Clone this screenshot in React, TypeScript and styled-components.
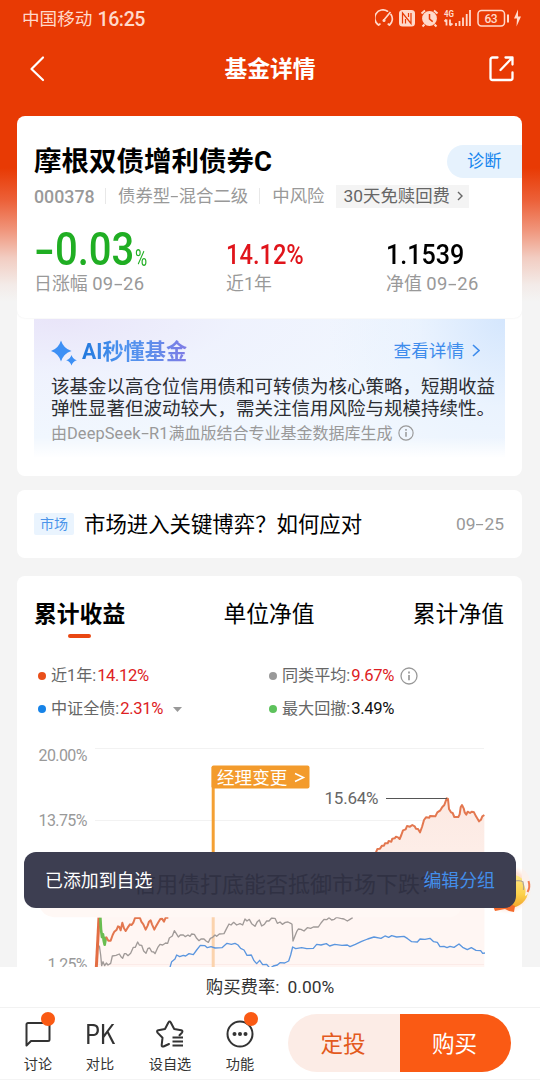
import React from 'react';
import styled, { createGlobalStyle } from 'styled-components';

const GlobalStyle = createGlobalStyle`
  * { box-sizing: border-box; }
  body { margin: 0; font-family: Roboto, "Noto Sans CJK SC", sans-serif; }
`;

const Screen = styled.div`
  position: relative;
  width: 540px;
  height: 1080px;
  overflow: hidden;
  display: flex;
  flex-direction: column;
  background: linear-gradient(180deg, #e83a04 0, #e83a04 168px, #ec6038 200px, #f0957b 230px, #f2cdc2 258px, #f3ebe8 285px, #f4f4f4 302px);
`;

const StatusBar = styled.div`
  height: 38px;
  flex: none;
  display: flex;
  align-items: center;
  justify-content: space-between;
  padding: 0 17px 0 22px;
  color: #ffd9cb;
  font-size: 17.6px;
`;

const Carrier = styled.div`
  display: flex;
  align-items: center;
  gap: 5px;
  height: 24px;
  white-space: nowrap;
  line-height: 24px;
  b { font-weight: 500; font-size: 19.6px; letter-spacing: -0.4px; margin-top: 1px; }
`;

const NavBar = styled.div`
  height: 78px;
  flex: none;
  display: flex;
  align-items: flex-start;
  justify-content: space-between;
  padding: 16px 24px 0 29px;
  color: #fff;
`;

const NavTitle = styled.h1`
  margin: 1px 0 0;
  font-size: 22.8px;
  line-height: 30px;
  font-weight: 700;
  padding-left: 7px;
`;

const Content = styled.main`
  flex: 1;
  min-height: 0;
  overflow: hidden;
  padding: 0 18px 0 17px;
  display: flex;
  flex-direction: column;
`;

const Card = styled.section<{ $h: number; $mb?: number }>`
  flex: none;
  height: ${p => p.$h}px;
  margin-bottom: ${p => p.$mb ?? 0}px;
  border-radius: 8px;
  background: #fff;
  overflow: hidden;
`;

const Summary = styled.div`
  height: 202px;
  padding: 28px 0 0 17px;
  border-radius: 0 0 8px 8px;
  box-shadow: 0 0 2px #e9e9e9;
`;

const TitleRow = styled.div`
  display: flex;
  align-items: center;
  justify-content: space-between;
  height: 34px;
`;

const FundName = styled.h2`
  margin: 2px 0 0;
  font-size: 27.5px;
  line-height: 34px;
  font-weight: 700;
  color: #000;
  white-space: nowrap;
`;

const Diagnose = styled.div`
  width: 75px;
  height: 33px;
  border-radius: 17px 0 0 17px;
  background: #e6f2fd;
  color: #1786ee;
  font-size: 17.2px;
  line-height: 33px;
  padding-left: 20px;
`;

const MetaRow = styled.div`
  display: flex;
  align-items: center;
  height: 24px;
  margin-top: 6px;
  font-size: 17.4px;
  line-height: 22px;
  color: #999;
  white-space: nowrap;
`;

const MetaText = styled.span`
  height: 22px;
`;

const Code = styled.span`
  font-size: 17.8px;
  font-weight: 500;
  width: 60px;
  margin-top: 1px;
`;

const Divider = styled.i`
  width: 1px;
  height: 16px;
  background: #e8e8e8;
  margin: 0 12px 0 11px;
`;

const FeeTag = styled.span`
  display: flex;
  align-items: center;
  gap: 7px;
  height: 23px;
  width: 133px;
  margin-left: 12px;
  padding-left: 7px;
  background: #f4f4f4;
  color: #666;
`;

const Dash = styled.span<{ $w: number; $up?: number; $k?: number }>`
  display: inline-block;
  width: ${p => p.$w}px;
  text-align: center;
  transform: translateY(${p => -(p.$up ?? 0)}px) scaleX(${p => p.$k ?? 1.7});
`;

const Stats = styled.div`
  display: grid;
  grid-template-columns: 192px 160px 1fr;
  margin-top: 17px;
`;

const Stat = styled.div`
  display: flex;
  flex-direction: column;
`;

const StatTop = styled.div`
  height: 46px;
  display: flex;
  align-items: flex-end;
`;

const Figure = styled.span<{ $size: number; $w: number; $c: string; $sx: number; $lh: number; $wt?: number }>`
  display: block;
  width: ${p => p.$w}px;
  color: ${p => p.$c};
  font-size: ${p => p.$size}px;
  line-height: ${p => p.$lh}px;
  font-weight: ${p => p.$wt ?? 500};
  white-space: nowrap;
  transform: scaleX(${p => p.$sx});
  transform-origin: left;
`;

const StatLabel = styled.div`
  font-size: 17.9px;
  line-height: 24px;
  color: #999;
  margin-top: 1px;
`;

const StatDate = styled.span`
  font-size: 18.4px;
  letter-spacing: 0.4px;
`;

const AiBox = styled.div`
  height: 139px;
  margin: 1px 17px 0;
  padding: 20px 8px 0 17px;
  background:
    linear-gradient(180deg, rgba(255,255,255,0) 0, rgba(255,255,255,0) 85%, #fff 100%),
    radial-gradient(circle at 100% 0, rgba(205,226,253,.8) 0, rgba(226,238,254,.45) 18%, rgba(255,255,255,0) 36%),
    radial-gradient(ellipse at 5% 0, #e9e5f9 0, rgba(238,240,253,.7) 28%, rgba(255,255,255,0) 60%),
    #f1f7fe;
`;

const AiHead = styled.div`
  height: 26px;
  display: flex;
  align-items: center;
`;

const AiTitle = styled.span`
  margin: -1px 0 0 4px;
  flex: 1;
  font-size: 21.2px;
  line-height: 26px;
  font-weight: 700;
  color: transparent;
  background: linear-gradient(90deg, #2178dd 0, #4e93ef 40px, #5a90ec 65px, #817be5 106px);
  background-clip: text;
  -webkit-background-clip: text;
`;

const AiLink = styled.span`
  display: flex;
  align-items: center;
  gap: 8px;
  margin: -6px 17px 0 0;
  font-size: 17.6px;
  color: #3e8cec;
  svg { margin-top: 3px; }
`;

const AiText = styled.p`
  margin: 11px 0 0;
  font-size: 18.5px;
  line-height: 22px;
  color: #2c2e33;
  white-space: nowrap;
`;

const AiNote = styled.div`
  display: flex;
  align-items: center;
  gap: 5px;
  margin-top: 3px;
  height: 22px;
  line-height: 20px;
  font-size: 16px;
  color: #999;
  white-space: nowrap;
  svg { margin-top: -2px; }
`;

const ModelName = styled.span`
  font-size: 16.4px;
  letter-spacing: 0.1px;
`;

const NoteText = styled.span`
  margin-top: -1px;
`;

const NewsRow = styled.div`
  height: 68px;
  padding: 0 18px 0 17px;
  display: flex;
  align-items: center;
`;

const NewsTag = styled.span`
  width: 40px;
  height: 22px;
  border-radius: 2px;
  background: #eaf4fe;
  color: #4b94ea;
  font-size: 14px;
  line-height: 22px;
  text-align: center;
`;

const NewsTitle = styled.span`
  flex: 1;
  margin: -3px 0 0 10px;
  font-size: 21.4px;
  color: #000;
  white-space: nowrap;
`;

const NewsDate = styled.span`
  font-size: 17.4px;
  color: #999;
`;

const Tabs = styled.div`
  display: flex;
  justify-content: space-between;
  padding: 22px 18px 0 17px;
  height: 62px;
`;

const Tab = styled.div<{ $on?: boolean }>`
  display: flex;
  flex-direction: column;
  align-items: center;
  font-size: 22.8px;
  line-height: 33px;
  font-weight: ${p => (p.$on ? 700 : 400)};
  color: #000;
  &::after {
    content: "";
    width: 23px;
    height: 4px;
    margin-top: 3px;
    border-radius: 2px;
    background: ${p => (p.$on ? '#e94712' : 'transparent')};
  }
`;

const Legend = styled.div`
  display: grid;
  grid-template-columns: 231px 1fr;
  grid-auto-rows: 33px;
  padding: 21px 0 0 21px;
  height: 97px;
`;

const LegendItem = styled.div<{ $dot: string }>`
  display: flex;
  align-items: center;
  font-size: 16.1px;
  line-height: 24px;
  color: #666;
  white-space: nowrap;
  &::before {
    content: "";
    width: 8px;
    height: 8px;
    margin-right: 5px;
    border-radius: 50%;
    background: ${p => p.$dot};
  }
  svg { margin-left: 6px; }
`;

const Value = styled.b<{ $c: string }>`
  font-weight: 400;
  font-size: 16.6px;
  letter-spacing: -0.35px;
  margin: 1px 0 0 1px;
  color: ${p => p.$c};
`;

const ChartSvg = styled.svg`
  display: block;
  font-family: Roboto, "Noto Sans CJK SC", sans-serif;
`;

const FeeBar = styled.div`
  flex: none;
  height: 41px;
  background: #fff;
  border-bottom: 1px solid #f2f2f2;
  display: flex;
  justify-content: center;
  align-items: center;
  gap: 8px;
  font-size: 17.4px;
  line-height: 24px;
  color: #333;
`;

const ActionBar = styled.div`
  flex: none;
  height: 72px;
  background: #fff;
  border-bottom: 1px solid #f4f4f4;
  display: flex;
`;

const Actions = styled.div`
  width: 288px;
  display: grid;
  grid-template-columns: 76px 48px 92px 48px;
`;

const Action = styled.div`
  display: flex;
  flex-direction: column;
  align-items: center;
  padding-top: 9px;
  font-size: 14.2px;
  line-height: 20px;
  color: #333;
  white-space: nowrap;
`;

const IconSlot = styled.div<{ $badge?: boolean }>`
  position: relative;
  height: 34px;
  margin-bottom: 3px;
  display: flex;
  align-items: center;
  &::after {
    content: "";
    display: ${p => (p.$badge ? 'block' : 'none')};
    position: absolute;
    top: -5px;
    right: -4px;
    width: 14px;
    height: 14px;
    border-radius: 50%;
    background: #fa5a14;
  }
`;

const Pk = styled.span`
  font: 400 27px "Noto Sans CJK SC", sans-serif;
  line-height: 30px;
  margin-top: -3px;
  letter-spacing: -0.5px;
  transform: scaleX(.9);
`;

const TradeButton = styled.button<{ $primary?: boolean }>`
  margin-top: 6px;
  width: ${p => (p.$primary ? 111 : 112)}px;
  height: 58px;
  border: 0;
  padding: 0 2px 2px 0;
  font: 400 22.6px "Noto Sans CJK SC", sans-serif;
  color: ${p => (p.$primary ? '#fff' : '#e35a1d')};
  background: ${p => (p.$primary ? '#fa5a14' : '#fcece6')};
  border-radius: ${p => (p.$primary ? '0 29px 29px 0' : '29px 0 0 29px')};
`;

const MascotSvg = styled.svg`
  position: absolute;
  left: 484px;
  top: 862px;
`;

const Toast = styled.div`
  position: absolute;
  left: 24px;
  top: 852px;
  width: 492px;
  height: 55.5px;
  border-radius: 12px;
  background: #3d3e51;
  display: flex;
  align-items: center;
  justify-content: space-between;
  padding: 0 21px 2px 21px;
  font-size: 17.9px;
  color: #fff;
`;

const ToastText = styled.span`
  position: relative;
`;

const ToastLink = styled(ToastText)`
  color: #438eea;
`;

const Ghost = styled.span`
  position: absolute;
  left: 110px;
  top: 17px;
  font-size: 22px;
  line-height: 32px;
  color: #303143;
  white-space: nowrap;
`;

const Chevron = ({ w, h, sw }: { w: number; h: number; sw: number }) => (
  <svg width={w} height={h} viewBox={`0 0 ${w} ${h}`} fill="none" stroke="currentColor" strokeWidth={sw}>
    <path d={`M1 1L${w - 1} ${h / 2}L1 ${h - 1}`} />
  </svg>
);

const Info = ({ s }: { s: number }) => (
  <svg width={s} height={s} viewBox="0 0 18 18" fill="none" stroke="#999" strokeWidth="1.3">
    <circle cx="9" cy="9" r="8" />
    <path d="M9 8v5.2M9 4.6v1.8" strokeWidth="1.7" />
  </svg>
);

const StatusIcons = () => (
  <svg width="148" height="20" viewBox="375 9 148 20" fill="none" stroke="#ffd9cb" strokeWidth="1.7">
    <path d="M378.5 25A8 8 0 0 1 387.5 11.2M391 14.5A8 8 0 0 1 389.5 25" strokeLinecap="round" />
    <path d="M378.5 25l2-1.4M389.5 25l-1.8-1.4M383.5 20.5L390.5 12" />
    <circle cx="384" cy="20.5" r="1.5" fill="#ffd9cb" stroke="none" />
    <rect x="399" y="10" width="16" height="16.5" rx="3.5" fill="#ffd9cb" stroke="none" />
    <path d="M402.5 23.5V13l8.5 10.5V13M405.5 23.5v-4.5M408.5 13v4" stroke="#e83a04" strokeWidth="1.2" />
    <circle cx="429.5" cy="18.5" r="7.4" fill="#ffd9cb" stroke="none" />
    <path d="M421.5 13.5l3.5-3M437.5 13.5l-3.5-3M424.5 24.5l-2 2M434.5 24.5l2 2" strokeWidth="2" />
    <path d="M429.5 14v5l3.2 2.6" stroke="#e83a04" strokeWidth="1.5" />
    <text x="444" y="17" fontSize="9" fontWeight="700" fill="#ffd9cb" stroke="none" textLength="10" lengthAdjust="spacingAndGlyphs">4G</text>
    <path d="M446.5 19.5v6M444.5 21.5l2-2M450 19.5v6M452.5 23.5l-2.5 2M456 23v3M459.5 21v5M463 17.5v8.5M466.7 14v12M470 10v16" strokeWidth="1.8" />
    <rect x="478" y="10.5" width="26.5" height="15.5" rx="3.5" strokeWidth="1.5" />
    <path d="M508 14.5v8" strokeWidth="2" />
    <text x="484.5" y="22.6" fontSize="12" fontWeight="500" fill="#ffd9cb" stroke="none" textLength="13">63</text>
    <path d="M518 9.5l-4 9h3l-.5 8 4.5-10h-3z" fill="#ffd9cb" stroke="none" />
  </svg>
);

const redLeft = '318,605 325,617 332,617 338,600 343,590 350,584 354,574 358,576 362,586 367,563 372,580 377,588 383,578 390,568 395,570 400,563 405,549 420,549 424,560 430,568 437,584 443,572 447,560 452,556 456,568 463,584 469,572 475,562 481,552 486,551 492,560 497,548 505,548';
const redRight = '1128,352 1132,342 1140,341 1146,332 1152,332 1155,325 1163,325 1166,318 1174,320 1177,311 1184,310 1188,305 1194,307 1199,312 1204,300 1209,286 1217,283 1221,273 1230,275 1237,270 1244,274 1248,281 1254,282 1260,292 1266,276 1272,255 1278,247 1288,248 1290,243 1306,244 1312,232 1321,226 1327,216 1333,210 1340,190 1344,192 1347,222 1353,232 1358,234 1363,246 1375,246 1379,238 1382,217 1386,210 1391,220 1394,232 1399,239 1403,230 1410,234 1415,230 1422,232 1428,244 1437,259 1443,254 1447,244 1453,240';
const grayLine = '298,632 302,660 305,692 309,680 314,692 319,684 324,690 332,685 337,663 348,661 358,657 363,665 368,670 373,656 378,656 384,662 392,655 400,637 406,637 413,621 418,630 425,631 431,648 438,655 444,640 449,639 455,650 461,651 465,656 473,638 480,628 488,630 497,624 503,625 508,609 517,603 523,587 529,596 535,606 541,600 550,600 556,605 564,600 570,604 575,597 583,598 590,610 597,617 603,612 612,612 618,618 625,622 631,610 638,607 645,600 650,604 658,597 672,596 680,580 687,567 693,570 701,562 710,570 720,566 728,570 735,552 741,558 748,553 755,566 765,574 772,560 778,555 785,573 793,568 800,558 807,558 815,549 825,550 832,565 840,561 847,568 856,562 864,561 872,565 876,568 879,618 884,605 890,590 895,582 903,583 912,588 922,578 932,580 940,576 955,576 963,564 972,553 980,554 987,548 995,555 1003,553 1010,547 1022,550 1032,552 1042,558 1050,553 1058,548';
const blueLine = '510,697 515,680 525,672 530,660 539,665 550,661 557,663 567,656 580,659 590,645 601,631 615,632 622,638 633,635 645,639 666,638 675,630 681,625 694,628 705,625 714,630 722,640 732,645 741,661 754,660 762,677 770,686 779,676 788,689 800,688 810,700 820,693 832,690 840,683 854,684 866,678 872,660 878,636 887,641 905,638 920,641 940,640 950,628 963,630 979,626 989,633 1004,628 1026,631 1042,630 1050,635 1066,628 1085,619 1103,612 1122,606 1143,610 1155,603 1166,607 1175,602 1190,606 1212,604 1223,611 1235,620 1252,621 1260,612 1275,613 1290,610 1301,620 1312,622 1320,635 1332,634 1341,638 1350,634 1362,637 1377,627 1388,637 1402,644 1414,638 1428,646 1442,647 1448,655 1455,654';

const Chart = () => (
  <ChartSvg width="505" height="232" viewBox="17 0 505 232">
    <defs>
      <linearGradient id="area" x1="0" y1="190" x2="0" y2="697" gradientUnits="userSpaceOnUse">
        <stop offset="0" stopColor="#fce9e2" />
        <stop offset="1" stopColor="#fff6f3" />
      </linearGradient>
    </defs>
    <path d="M95 13.5H484M95 85.5H484" stroke="#f2f2f2" />
    <polygon points={`1128,697 ${redRight} 1453,697`} fill="url(#area)" transform="scale(.33333)" />
    <path d="M484 160V232H97V160Z" fill="#fff6f3" />
    <path d="M97 229.5H484" stroke="#fcebe8" />
    <path d="M213.2 32V118" stroke="#f4a033" strokeWidth="3" />
    <path d="M213.2 182V232" stroke="#fbd3ad" strokeWidth="3" />
    <g transform="scale(.33333)" fill="none" strokeLinejoin="round" strokeWidth="4">
      <polyline points={grayLine} stroke="#a09a98" />
      <polyline points={blueLine} stroke="#5b96df" />
      <polyline points="289,697 297,548" stroke="#e36d43" strokeWidth="9" />
      <polyline points="301,548 303,583 306,606 309,598 311,616 314,629 318,605" stroke="#69bd50" strokeWidth="8" />
      <polyline points={redLeft} stroke="#e3774f" strokeWidth="6" />
      <polyline points={redRight} stroke="#e3774f" strokeWidth="6" />
    </g>
    <path d="M38 120H484V168H463Q460 182 449 182.3H54Q42 181 39 170Z" fill="#fff8f5" />
    <path d="M386 63.5H447" stroke="#555" strokeWidth="1.2" />
    <rect x="211.5" y="30.5" width="98" height="23" rx="2" fill="#f39b2c" />
    <g fontSize="16" fill="#999">
      <text x="38.5" y="26" textLength="49">20.00%</text>
      <text x="38.5" y="91" textLength="49">13.75%</text>
      <text x="47.5" y="235" textLength="40">1.25%</text>
    </g>
    <text x="324.5" y="69" fontSize="17" fill="#666" textLength="54">15.64%</text>
    <text x="217" y="49" fontSize="17.6" fill="#fff">经理变更</text>
    <path d="M295 38.5l8.5 4-8.5 4" stroke="#fff" strokeWidth="1.5" fill="none" />
  </ChartSvg>
);

const Mascot = () => (
  <MascotSvg width="52" height="54" viewBox="484 862 52 54">
    <defs>
      <radialGradient id="halo"><stop offset=".75" stopColor="#ffe0d2" /><stop offset="1" stopColor="#fff1e8" stopOpacity="0" /></radialGradient>
      <linearGradient id="body" x1="0" y1="0" x2="0" y2="1"><stop stopColor="#ffe98a" /><stop offset=".6" stopColor="#fcd14a" /><stop offset="1" stopColor="#f0a32a" /></linearGradient>
    </defs>
    <circle cx="507" cy="889" r="25" fill="url(#halo)" />
    <ellipse cx="509" cy="891" rx="19" ry="17" fill="url(#body)" />
    <path d="M522 868q9 7 8 17t-5 11q2-8-3-14z" fill="#fbf1ec" />
    <path d="M528.5 881q2 6-1 11" stroke="#f07a50" strokeWidth="2" fill="none" />
    <path d="M514 881q7-1 9 1 1 4 .5 8" stroke="#b3a48c" fill="none" strokeWidth="1.2" />
    <path d="M493 906l6-2 5 3 6-3 5 2-1 6-5-1-4-2-10 2z" fill="#f46a2b" />
  </MascotSvg>
);

export default function App() {
  return (
    <Screen>
      <GlobalStyle />
      <StatusBar>
        <Carrier><span>中国移动</span><b>16:25</b></Carrier>
        <StatusIcons />
      </StatusBar>
      <NavBar>
        <svg width="16" height="30" viewBox="0 0 16 30" fill="none" stroke="#fff" strokeWidth="2.2" strokeLinecap="round" strokeLinejoin="round">
          <path d="M14 3.5L2.5 15 14 26" />
        </svg>
        <NavTitle>基金详情</NavTitle>
        <svg width="28" height="30" viewBox="0 0 28 30" fill="none" stroke="#fff" strokeWidth="2.3" strokeLinecap="round" strokeLinejoin="round">
          <path d="M9.5 3.5H4.5a2 2 0 0 0-2 2V24a2 2 0 0 0 2 2H22.5a2 2 0 0 0 2-2v-5.500M17.5 3.5H24.5V10.5M24 4L12.5 16" />
        </svg>
      </NavBar>
      <Content>
        <Card $h={360} $mb={14}>
          <Summary>
            <TitleRow>
              <FundName>摩根双债增利债券C</FundName>
              <Diagnose>诊断</Diagnose>
            </TitleRow>
            <MetaRow>
              <Code>000378</Code>
              <Divider />
              <MetaText>债券型<Dash $w={8.5}>-</Dash>混合二级</MetaText>
              <Divider />
              <MetaText>中风险</MetaText>
              <FeeTag><MetaText>30天免赎回费</MetaText><Chevron w={6} h={10} sw={1.4} /></FeeTag>
            </MetaRow>
            <Stats>
              <Stat>
                <StatTop>
                  <Figure $size={46} $w={101} $c="#20ae23" $sx={0.87} $lh={43}><Dash $w={24} $k={1.5} $up={-1}>-</Dash>0.03</Figure>
                  <Figure $size={23} $w={14} $c="#20ae23" $sx={0.72} $lh={24} $wt={400}>%</Figure>
                </StatTop>
                <StatLabel>日涨幅 <StatDate>09<Dash $w={9.5}>-</Dash>26</StatDate></StatLabel>
              </Stat>
              <Stat>
                <StatTop><Figure $size={28.5} $w={80} $c="#e0141b" $sx={0.83} $lh={33}>14.12%</Figure></StatTop>
                <StatLabel>近1年</StatLabel>
              </Stat>
              <Stat>
                <StatTop><Figure $size={28.5} $w={80} $c="#000" $sx={0.88} $lh={33}>1.1539</Figure></StatTop>
                <StatLabel>净值 <StatDate>09<Dash $w={9.5}>-</Dash>26</StatDate></StatLabel>
              </Stat>
            </Stats>
          </Summary>
          <AiBox>
            <AiHead>
              <svg width="27" height="28" viewBox="0 0 27 28" fill="#3e90f5">
                <path d="M10 2.5Q12.5 10.5 20.5 13Q12.5 15.5 10 23.5Q7.5 15.5 0 13Q7.5 10.5 10 2.5Z" />
                <path d="M20.5 17Q21.7 21 25.8 22.2Q21.7 23.5 20.5 27.5Q19.3 23.5 15.2 22.2Q19.3 21 20.5 17Z" />
              </svg>
              <AiTitle>AI秒懂基金</AiTitle>
              <AiLink>查看详情<Chevron w={8} h={13} sw={1.6} /></AiLink>
            </AiHead>
            <AiText>该基金以高仓位信用债和可转债为核心策略，短期收益<br />弹性显著但波动较大，需关注信用风险与规模持续性。</AiText>
            <AiNote>
              <NoteText>由<ModelName>DeepSeek<Dash $w={8.5}>-</Dash>R1</ModelName>满血版结合专业基金数据库生成</NoteText>
              <Info s={16} />
            </AiNote>
          </AiBox>
        </Card>
        <Card $h={68} $mb={18}>
          <NewsRow>
            <NewsTag>市场</NewsTag>
            <NewsTitle>市场进入关键博弈？如何应对</NewsTitle>
            <NewsDate>09<Dash $w={9}>-</Dash>25</NewsDate>
          </NewsRow>
        </Card>
        <Card $h={420}>
          <Tabs>
            <Tab $on>累计收益</Tab>
            <Tab>单位净值</Tab>
            <Tab>累计净值</Tab>
          </Tabs>
          <Legend>
            <LegendItem $dot="#e94f1a">近1年:<Value $c="#dd2023">14.12%</Value></LegendItem>
            <LegendItem $dot="#999">同类平均:<Value $c="#dd2023">9.67%</Value><Info s={18} /></LegendItem>
            <LegendItem $dot="#1683e8">中证全债:<Value $c="#dd2023">2.31%</Value>
              <svg width="16" height="8" viewBox="0 0 16 8"><path d="M4 2h9L8.5 7z" fill="#999" /></svg>
            </LegendItem>
            <LegendItem $dot="#5dc25c">最大回撤:<Value $c="#111">3.49%</Value></LegendItem>
          </Legend>
          <Chart />
        </Card>
      </Content>
      <FeeBar><span>购买费率:</span><span>0.00%</span></FeeBar>
      <ActionBar>
        <Actions>
          <Action>
            <IconSlot $badge>
              <svg width="26" height="28" viewBox="0 0 26 28" fill="none" stroke="#333" strokeWidth="2" strokeLinejoin="round">
                <path d="M3 3H23a1.5 1.5 0 0 1 1.5 1.5V19.5a1.5 1.5 0 0 1-1.5 1.5H6L1.5 25.5V4.5A1.5 1.5 0 0 1 3 3Z" />
              </svg>
            </IconSlot>
            讨论
          </Action>
          <Action><IconSlot><Pk>PK</Pk></IconSlot>对比</Action>
          <Action>
            <IconSlot>
              <svg width="30" height="30" viewBox="0 0 30 30" fill="none" stroke="#333" strokeWidth="2" strokeLinejoin="round" strokeLinecap="round">
                <path d="M14 25l-5.5 2.5q-2 .5-1.8-1.7l.8-7-5-5.2q-1.2-1.8.8-2.3l6.7-1.3 3.4-6.5q1.2-1.8 2.4 0l3.4 6.500 7 1.300q2 .5.8 2.300l-2.500 2.700" />
                <path d="M17.5 18.5H28M17.5 22.5H28M17.5 26.5H28" strokeWidth="2" strokeLinecap="butt" />
              </svg>
            </IconSlot>
            设自选
          </Action>
          <Action>
            <IconSlot $badge>
              <svg width="28" height="28" viewBox="0 0 28 28" fill="none" stroke="#333" strokeWidth="2">
                <circle cx="14" cy="14" r="12.5" />
                <g fill="#333" stroke="none"><circle cx="8.5" cy="14" r="2" /><circle cx="14" cy="14" r="2" /><circle cx="19.5" cy="14" r="2" /></g>
              </svg>
            </IconSlot>
            功能
          </Action>
        </Actions>
        <TradeButton>定投</TradeButton>
        <TradeButton $primary>购买</TradeButton>
      </ActionBar>
      <Mascot />
      <Toast>
        <Ghost>信用债打底能否抵御市场下跌?</Ghost>
        <ToastText>已添加到自选</ToastText>
        <ToastLink>编辑分组</ToastLink>
      </Toast>
    </Screen>
  );
}
